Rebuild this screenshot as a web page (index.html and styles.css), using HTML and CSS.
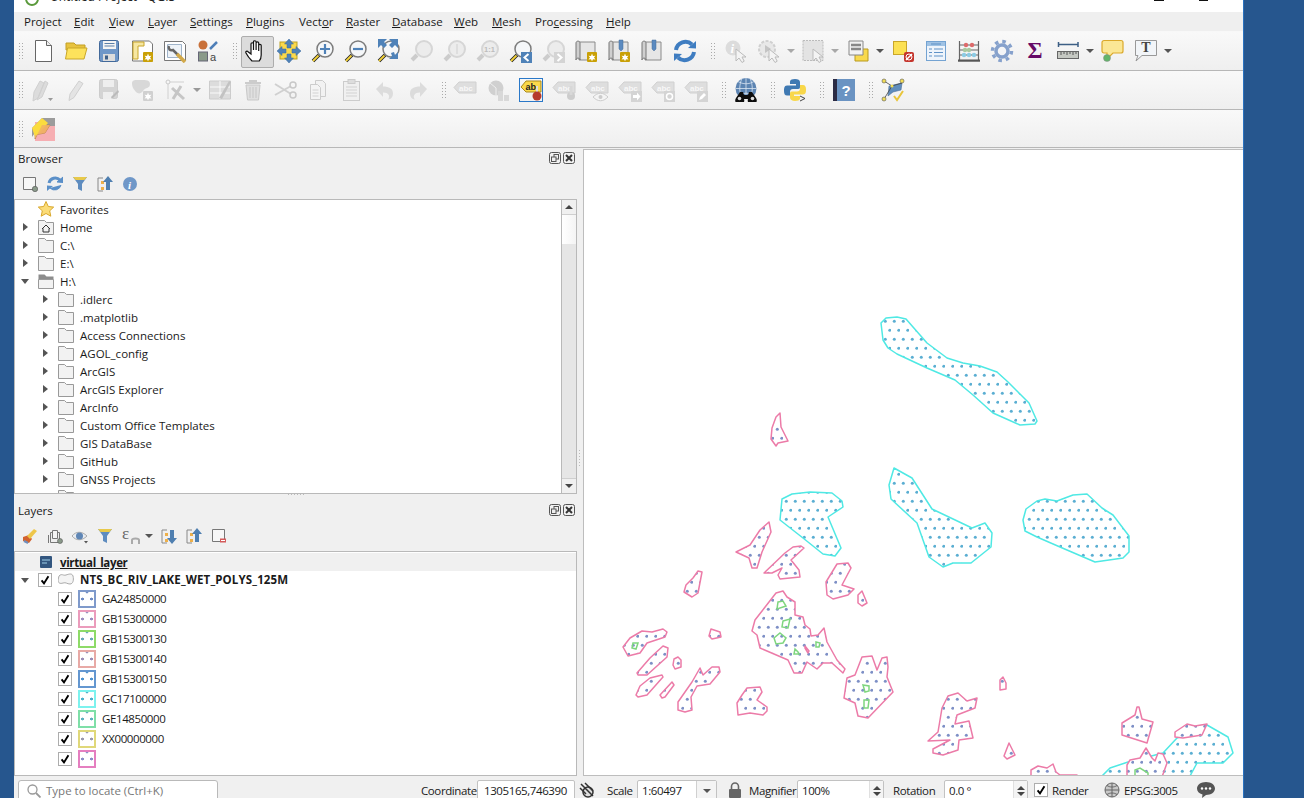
FILE: index.html
```html
<!DOCTYPE html>
<html lang="en">
<head>
<meta charset="utf-8">
<title>Untitled Project - QGIS</title>
<link rel="stylesheet" href="styles.css">
</head>
<body>
<svg class="sprite" aria-hidden="true">
  <defs>
    <symbol id="glass" viewBox="0 0 24 24"><path d="M8 16 3 21" stroke="#ccc" stroke-width="4"/><circle cx="15" cy="10" r="8" fill="#ececec" stroke="#d6d6d6" stroke-width="2"/></symbol>
    <symbol id="lens" viewBox="0 0 24 24"><path d="M9 16 3 22" stroke="#222" stroke-width="3.6"/><path d="M8.500 16.500 3 22" stroke="#f4d33a" stroke-width="1.800"/><circle cx="15" cy="10" r="8" fill="#f5f7f9" stroke="#7c7c7c" stroke-width="1.500"/></symbol>
    <symbol id="tag" viewBox="0 0 24 24"><path d="M1 9.500 6 4h17v11H6z" fill="#dedede" stroke="#d0d0d0"/><text x="6" y="13" class="abc">abc</text></symbol>
    <symbol id="scroll" viewBox="0 0 24 24"><path d="M5 3h16v18H5z" fill="#e6e6e6" stroke="#8a8a8a"/><path d="M2 4c0-2.500 4-2.500 4 0v17c0-2.500-4-2.500-4 0z" fill="#cfcfcf" stroke="#777"/></symbol>
    <symbol id="gearb" viewBox="0 0 24 24"><rect x="13" y="13" width="10" height="10" rx="1" fill="#c9a006"/><path d="M18 14.500 19 17l2.500-.2-1.500 1.700 1.500 2-2.500-.3-1 2-1-2-2.500.3 1.500-2-1.500-1.700 2.500.2z" fill="#fff"/></symbol>
    <symbol id="cur" viewBox="0 0 24 24"><path d="M12 10v12l3-3 3 4.500 2.200-1.300L18 18h4z" fill="#f4f4f4" stroke="#bbb"/></symbol>
    <symbol id="folder" viewBox="0 0 16 16"><path d="M.5 1.500h6l2 2h7v12H.5z" fill="#f2f2f2" stroke="#999"/></symbol>
    <symbol id="check" viewBox="0 0 14 14"><path d="M3 7.500 5.800 11 11 2.500" fill="none" stroke="#000" stroke-width="2.200"/></symbol>
    <pattern id="dt" width="9" height="18" patternUnits="userSpaceOnUse"><rect width="9" height="18" fill="#fff"/><circle cx="3.300" cy="15.300" r="1.500" fill="#5aaed2"/><circle cx="7.800" cy="6.300" r="1.500" fill="#5aaed2"/></pattern>
    <pattern id="dp" width="9" height="18" patternUnits="userSpaceOnUse"><rect width="9" height="18" fill="#fff"/><circle cx="3.300" cy="15.300" r="1.500" fill="#7d8fc6"/><circle cx="7.800" cy="6.300" r="1.500" fill="#7d8fc6"/></pattern>
  </defs>
</svg>
<div class="window">
  <div class="titlebar">
    <svg class="qlogo" viewBox="0 0 14 6"><path d="M1 0c1 3 3 5 6 5s5-2 6-5" fill="none" stroke="#5b9a3c" stroke-width="2"/></svg>
    <span class="titletext">Untitled Project - QGIS</span>
    <span class="minbar"></span><span class="maxbar"></span>
  </div>
  <nav class="menubar">
    <span>Pro<u>j</u>ect</span><span><u>E</u>dit</span><span><u>V</u>iew</span><span><u>L</u>ayer</span><span><u>S</u>ettings</span><span><u>P</u>lugins</span><span>Vect<u>o</u>r</span><span><u>R</u>aster</span><span><u>D</u>atabase</span><span><u>W</u>eb</span><span><u>M</u>esh</span><span>Pro<u>c</u>essing</span><span><u>H</u>elp</span>
  </nav>
  <div class="tb">
    <div class="h h-first"><i></i></div>
    <div class="b"><svg viewBox="0 0 24 24"><path d="M4.500 1.500h11l5 5v16h-16z" fill="#fff" stroke="#666"/><path d="M15.500 1.500v5h5" fill="#eee" stroke="#666"/></svg></div>
    <div class="b"><svg viewBox="0 0 24 24"><path d="M2 11V4h8l2 2h9v5z" fill="#e8c33f" stroke="#c29f25"/><path d="M3.500 9H23l-3 11H1.500z" fill="#fde25c" stroke="#c9a62a"/></svg></div>
    <div class="b"><svg viewBox="0 0 24 24"><rect x="2.500" y="1.500" width="19" height="21" rx="2" fill="#6f97c8" stroke="#42699a"/><rect x="6" y="2" width="13" height="8" fill="#f4f4f4"/><path d="M7.500 4.500h10M7.500 7h10" stroke="#5a7fa8"/><rect x="6" y="15" width="12" height="7" fill="#dcdcdc"/><rect x="8" y="16.500" width="3" height="4" fill="#3e5f88"/></svg></div>
    <div class="b"><svg viewBox="0 0 24 24"><path d="M2.500 2h17l3 3v17h-20z" fill="#fff" stroke="#777"/><path d="M3 3h11v4H8v13H3z" fill="#f6e7a2" stroke="#c9a62a"/><use href="#gearb"/></svg></div>
    <div class="b"><svg viewBox="0 0 24 24"><path d="M1.500 2.500h18l3 3v16h-21z" fill="#fff" stroke="#777"/><path d="M4.500 5.500h14v13h-14z" fill="#eef3f8" stroke="#9fb3c9"/><path d="M6 7c-1 3 1 5 4 4l5 5" fill="none" stroke="#666" stroke-width="2.500"/><path d="m14 15 8 8" stroke="#d2a94a" stroke-width="3.500"/></svg></div>
    <div class="b"><svg viewBox="0 0 24 24"><circle cx="7" cy="6" r="4.500" fill="#c9713a"/><path d="m14 10 7-7" stroke="#4f7fb8" stroke-width="2.500"/><rect x="2.500" y="13" width="9" height="9" fill="#8a9a8a" stroke="#667"/><text x="14" y="22" class="a-letter">a</text></svg></div>
    <div class="h h-15"><i></i></div>
    <div class="b on"><svg viewBox="0 0 24 24"><path d="M8 22c-2-2-5-6-6-8-.7-1.500 1-2.400 2-1.300L7 15V5c0-1.700 2.400-1.700 2.500 0v6-8c0-1.700 2.600-1.700 2.600 0v8-7c0-1.600 2.500-1.600 2.600 0v8-5.500c0-1.500 2.500-1.500 2.500 0V16c0 3-1 5-2 6z" fill="#fff" stroke="#111" stroke-width="1.200"/></svg></div>
    <div class="b"><svg viewBox="0 0 24 24"><rect x="3" y="3" width="17" height="17" fill="#fbd94a" stroke="#b9a025"/><path d="m12 0 4.500 5H14v4h-4V5H7.500zM12 24l4.500-5H14v-4h-4v4H7.500zM0 12l5-4.500V10h4v4H5v2.500zM24 12l-5-4.500V10h-4v4h4v2.500z" fill="#4f82b8" stroke="#3a6a9e" stroke-width=".5"/></svg></div>
    <div class="b"><svg viewBox="0 0 24 24"><use href="#lens"/><path d="M15 5v10M10 10h10" stroke="#4f82b8" stroke-width="2.200"/></svg></div>
    <div class="b"><svg viewBox="0 0 24 24"><use href="#lens"/><path d="M10 10h10" stroke="#4f82b8" stroke-width="2.200"/></svg></div>
    <div class="b"><svg viewBox="0 0 24 24"><use href="#lens"/><path d="M2 0h9L8 3l3 3-3 3-3-3-3 3zM22 0h-9l3 3-3 3 3 3 3-3 3 3zM22 20h-9l3-3-1-3 3-1 1 3 3-3z" fill="#4f82b8"/></svg></div>
    <div class="b"><svg viewBox="0 0 24 24"><use href="#glass"/></svg></div>
    <div class="b"><svg viewBox="0 0 24 24"><use href="#glass"/><path d="M15 5v10" stroke="#d0d0d0"/></svg></div>
    <div class="b"><svg viewBox="0 0 24 24"><use href="#glass"/><text x="9" y="13" class="oneone">1:1</text></svg></div>
    <div class="b"><svg viewBox="0 0 24 24"><use href="#lens"/><rect x="13" y="13" width="11" height="11" fill="#4f82b8"/><path d="m20.500 15-4 3.500 4 3.500" fill="none" stroke="#fff" stroke-width="2"/></svg></div>
    <div class="b"><svg viewBox="0 0 24 24"><use href="#glass"/><rect x="13" y="13" width="11" height="11" fill="#d4d4d4"/><path d="m16.500 15 4 3.500-4 3.500" fill="none" stroke="#fff" stroke-width="2"/></svg></div>
    <div class="b"><svg viewBox="0 0 24 24"><use href="#scroll"/><use href="#gearb"/></svg></div>
    <div class="b"><svg viewBox="0 0 24 24"><use href="#scroll"/><path d="M12 1h4v9l-2 2-2-2z" fill="#5b8ac0" stroke="#466c99" stroke-width=".5"/><use href="#gearb"/></svg></div>
    <div class="b"><svg viewBox="0 0 24 24"><use href="#scroll"/><path d="M12 1h4v9l-2 2-2-2z" fill="#5b8ac0" stroke="#466c99" stroke-width=".5"/></svg></div>
    <div class="b"><svg viewBox="0 0 24 24"><path d="M3 11A9.500 9.500 0 0 1 19 5.500" fill="none" stroke="#3f7dc1" stroke-width="4"/><path d="m15 9 8 .5V2z" fill="#3f7dc1"/><path d="M21 13A9.500 9.500 0 0 1 5 18.500" fill="none" stroke="#3f7dc1" stroke-width="4"/><path d="m9 15-8-.5V22z" fill="#3f7dc1"/></svg></div>
    <div class="h h-18"><i></i></div>
    <div class="b"><svg viewBox="0 0 24 24"><circle cx="9" cy="9" r="7.500" fill="#dcdcdc"/><text x="6.500" y="14" class="info-i">i</text><use href="#cur"/></svg></div>
    <div class="b"><svg viewBox="0 0 24 24"><circle cx="10" cy="10" r="8" fill="#e8e8e8" stroke="#d0d0d0" stroke-width="2" stroke-dasharray="3 1.500"/><path d="m8 6 6 4-6 4z" fill="#c4c4c4"/><use href="#cur"/></svg></div>
    <div class="dd d11 off"><i></i></div>
    <div class="b"><svg viewBox="0 0 24 24"><rect x="2" y="1.500" width="20" height="20" fill="#e3e3e3" stroke="#bbb" stroke-dasharray="2 1"/><use href="#cur"/></svg></div>
    <div class="dd off"><i></i></div>
    <div class="b"><svg viewBox="0 0 24 24"><path d="M9 10h13v12H9z" fill="#f8d94d" stroke="#b99a1e"/><path d="M3 2h14v14H3z" fill="#f2f2f2" stroke="#888"/><path d="M5 6h10M5 10h10" stroke="#888" stroke-width="2.500"/></svg></div>
    <div class="dd on-d"><i></i></div>
    <div class="b"><svg viewBox="0 0 24 24"><rect x="2.500" y="2.500" width="13" height="13" fill="#fce153" stroke="#c9a62a"/><rect x="13" y="13" width="10" height="10" rx="2" fill="#c5352c"/><path d="m15 21 6-6" stroke="#fff" stroke-width="1.500"/><circle cx="18" cy="18" r="3" fill="none" stroke="#fff"/></svg></div>
    <div class="b"><svg viewBox="0 0 24 24"><rect x="2.500" y="2.500" width="19" height="19" fill="#eef4fb" stroke="#74a3d2"/><path d="M3 3h18v4H3z" fill="#9fc2e4"/><path d="M7 5h10" stroke="#5d8fc4"/><path d="M5 10h3M10 10h9M5 13.500h3M10 13.500h9M5 17h3M10 17h9" stroke="#5f92c7"/></svg></div>
    <div class="b"><svg viewBox="0 0 24 24"><path d="M2.500 2v19M21.500 2v19M1 22h22M3 6h18M3 11h18M3 16h18" fill="none" stroke="#666" stroke-width="1.200"/><path d="M1 21.500h22" stroke="#555" stroke-width="2"/><circle cx="9" cy="6" r="2.200" fill="#dd6b6b"/><circle cx="15" cy="6" r="2.200" fill="#dd6b6b"/><circle cx="8" cy="11" r="2.200" fill="#a9c9a0"/><circle cx="12" cy="11" r="2.200" fill="#a9c9a0"/><circle cx="7" cy="16" r="2.200" fill="#8ccbe4"/><circle cx="12" cy="16" r="2.200" fill="#8ccbe4"/><circle cx="17" cy="16" r="2.200" fill="#8ccbe4"/></svg></div>
    <div class="b"><svg viewBox="0 0 24 24"><circle cx="12" cy="12" r="9.500" fill="none" stroke="#86a1cc" stroke-width="3.500" stroke-dasharray="3.500 3.960"/><circle cx="12" cy="12" r="6" fill="#f4f5f7" stroke="#86a1cc" stroke-width="3.500"/></svg></div>
    <div class="b"><svg viewBox="0 0 24 24"><text x="12" y="19" class="sigma">Σ</text></svg></div>
    <div class="b"><svg viewBox="0 0 24 24"><path d="M3 5.500h19M2.500 3v5M22 3v5" stroke="#3d5f85" stroke-width="1.500"/><rect x="1.500" y="12.500" width="21" height="7" fill="#c5c8c2" stroke="#666"/><path d="M5 13v3M8 13v2M11 13v3M14 13v2M17 13v3M20 13v2" stroke="#555"/></svg></div>
    <div class="dd on-d"><i></i></div>
    <div class="b"><svg viewBox="0 0 24 24"><path d="M3 1.500h17a2 2 0 0 1 2 2V12a2 2 0 0 1-2 2h-8l-6 6v-6H3a2 2 0 0 1-2-2V3.500a2 2 0 0 1 2-2z" fill="#fbe795" stroke="#dba92b" stroke-width="1.200"/><circle cx="6" cy="19" r="3.500" fill="#62b56a" stroke="#888" stroke-width=".5"/></svg></div>
    <div class="b"><svg viewBox="0 0 24 24"><path d="M1.500 1.500h21v15H8L2 22l2-5.500H1.500z" fill="#f2f5f8" stroke="#999"/><text x="12" y="13" class="t-letter">T</text></svg></div>
    <div class="dd on-d"><i></i></div>
  </div>
  <div class="tb">
    <div class="h h-first"><i></i></div>
    <div class="b"><svg viewBox="0 0 24 24"><path d="m3 14 6-11 4 2-6 15-5 3zM9 15l5-12 3 2-6 14-5 3z" fill="#dcdcdc" stroke="#d0d0d0"/><path d="m17 20 2.500 3 2.500-3z" fill="#999"/></svg></div>
    <div class="b"><svg viewBox="0 0 24 24"><path d="m6 16 9-13 4 2.500-9 14-5 3z" fill="#e4e4e4" stroke="#d0d0d0"/></svg></div>
    <div class="b"><svg viewBox="0 0 24 24"><rect x="2.500" y="1.500" width="18" height="19" rx="2" fill="#d4d4d4" stroke="#ccc"/><rect x="6" y="2" width="11" height="7" fill="#eee"/><rect x="6" y="14" width="10" height="7" fill="#eee"/><path d="m15 21 7-7-1-2-7 7z" fill="#bbb"/></svg></div>
    <div class="b"><svg viewBox="0 0 24 24"><path d="M2 5c0-4 6-3 9-3 5 0 9 0 9 4 0 5-5 3-7 7-2 3-5 3-7 1-2-3-4-4-4-9z" fill="#d8d8d8"/><rect x="13" y="13" width="10" height="10" rx="1" fill="#d0d0d0"/><path d="M18 14.500 19 17l2.500-.2-1.500 1.700 1.500 2-2.500-.3-1 2-1-2-2.500.3 1.500-2-1.500-1.700 2.500.2z" fill="#fff"/></svg></div>
    <div class="b"><svg viewBox="0 0 24 24"><circle cx="5" cy="4" r="2" fill="none" stroke="#c8c8c8"/><path d="M5 6v15M7 4h14" stroke="#d0d0d0"/><path d="m9 10 12 11M18 8l-8 13" stroke="#c6c6c6" stroke-width="3"/></svg></div>
    <div class="dd on-g"><i></i></div>
    <div class="b"><svg viewBox="0 0 24 24"><path d="M1.500 3h21v18h-21z" fill="#dcdcdc" stroke="#ccc"/><path d="M2 9h20M2 15h20M12 3v18" stroke="#fafafa"/><path d="m11 20 10-17 2 1-9 17z" fill="#c2c2c2"/></svg></div>
    <div class="b"><svg viewBox="0 0 24 24"><path d="M4 5h16M9 5V3h6v2" fill="none" stroke="#ccc" stroke-width="2"/><path d="M5 7h14l-1.500 15h-11z" fill="#e0e0e0" stroke="#c8c8c8"/><path d="M9 9v11M12 9v11M15 9v11" stroke="#c6c6c6"/></svg></div>
    <div class="b"><svg viewBox="0 0 24 24"><path d="M1 6 17 16M1 17 17 8" stroke="#d0d0d0" stroke-width="2"/><circle cx="19" cy="7" r="3" fill="none" stroke="#c8c8c8" stroke-width="1.500"/><circle cx="19" cy="17" r="3" fill="none" stroke="#c8c8c8" stroke-width="1.500"/></svg></div>
    <div class="b"><svg viewBox="0 0 24 24"><path d="M8.500 2.500h7l3 3v13h-10z" fill="#f2f2f2" stroke="#ccc"/><path d="M3.500 6.500h7l3 3v12h-10z" fill="#f4f4f4" stroke="#ccc"/><path d="M5.500 12h6M5.500 15h6M5.500 18h6" stroke="#d2d2d2"/></svg></div>
    <div class="b"><svg viewBox="0 0 24 24"><rect x="3.500" y="3.500" width="16" height="19" fill="#f0f0f0" stroke="#ccc"/><rect x="8" y="1.500" width="7" height="4" fill="#ddd" stroke="#ccc"/><path d="M6 9h11M6 12h11M6 15h11M6 18h11" stroke="#d2d2d2"/></svg></div>
    <div class="b"><svg viewBox="0 0 24 24"><path d="M3 11 10 4v4.500c6 0 10 2 10 7 0 3-2 6-5 6 2-2 2-7-5-7V19z" fill="#dcdcdc"/></svg></div>
    <div class="b"><svg viewBox="0 0 24 24"><path d="m21 11-7-7v4.500c-6 0-10 2-10 7 0 3 2 6 5 6-2-2-2-7 5-7V19z" fill="#dcdcdc"/></svg></div>
    <div class="h h-14"><i></i></div>
    <div class="b"><svg viewBox="0 0 24 24"><use href="#tag"/></svg></div>
    <div class="b"><svg viewBox="0 0 24 24"><circle cx="10" cy="10" r="7.500" fill="#d0d0d0"/><path d="m4 5 6 5v9" fill="none" stroke="#efefef"/><rect x="12" y="13" width="5" height="10" fill="#d8d8d8"/><rect x="18" y="17" width="5" height="6" fill="#d8d8d8"/></svg></div>
    <div class="b"><svg viewBox="0 0 24 24"><rect x=".5" y=".5" width="23" height="23" fill="none" stroke="#2a78c8"/><path d="M2 9 7 3h15v11H7z" fill="#fbd94a" stroke="#a8891c"/><text x="6.500" y="12" class="ab">ab</text><rect x="17" y="8" width="2" height="8" fill="#ddd"/><circle cx="18" cy="18" r="4.500" fill="#b53a2c"/></svg></div>
    <div class="b"><svg viewBox="0 0 24 24"><use href="#tag"/><circle cx="19" cy="18" r="4" fill="#cdcdcd"/><rect x="17.500" y="8" width="3" height="9" fill="#d8d8d8"/></svg></div>
    <div class="b"><svg viewBox="0 0 24 24"><use href="#tag"/><path d="M8 19c5-5 10-5 15 0-5 5-10 5-15 0z" fill="#f4f4f4" stroke="#ccc"/><circle cx="15.500" cy="19" r="2" fill="#ccc"/></svg></div>
    <div class="b"><svg viewBox="0 0 24 24"><use href="#tag"/><rect x="13" y="13" width="11" height="11" fill="#d4d4d4"/><path d="M15 17h4v-2.500l3.500 4-3.500 4V20h-4z" fill="#fff"/></svg></div>
    <div class="b"><svg viewBox="0 0 24 24"><use href="#tag"/><rect x="13" y="13" width="11" height="11" fill="#d4d4d4"/><circle cx="18.500" cy="18.500" r="3" fill="none" stroke="#fff" stroke-width="1.500"/></svg></div>
    <div class="b"><svg viewBox="0 0 24 24"><use href="#tag"/><rect x="13" y="13" width="11" height="11" fill="#d4d4d4"/><path d="m15 22 1-3 4-4 2 2-4 4z" fill="#fff"/></svg></div>
    <div class="h h-17"><i></i></div>
    <div class="b"><svg viewBox="0 0 24 24"><circle cx="12" cy="10.500" r="10.500" fill="#5c84b2"/><path d="M1.500 10.500h21M12 0v21M8 .5c-3 6-3 14 0 20M16 .5c3 6 3 14 0 20M4 3.500c5 3 11 3 16 0M4 17.500c5-3 11-3 16 0" stroke="#dbe6f2" stroke-width=".8" fill="none"/><path d="M6 14h3l1 3h4l1-3h3l4 6a4.500 4.500 0 1 1-8 1h-4a4.500 4.500 0 1 1-8-1z" fill="#0d0d0d"/><circle cx="5.500" cy="20.500" r="1.800" fill="#ddd"/><circle cx="18.500" cy="20.500" r="1.800" fill="#ddd"/></svg></div>
    <div class="h"><i></i></div>
    <div class="b"><svg viewBox="0 0 24 24"><path d="M12 1C6 1 7 4 7 6h6v1.500H4C1 7.500 1 11 1 13c0 3 1 4.500 3 4.500h3V14c0-2 1-3 3-3h5c2 0 2-1 2-3V4c0-2-2-3-5-3z" fill="#3f79b2"/><path d="M12 23c6 0 5-3 5-5h-6v-1.500h9c3 0 3-3 3-5 0-3-1-4.500-3-4.500h-3v3.500c0 2-1 3-3 3H9c-2 0-2 1-2 3v3c0 2 2 3.500 5 3.500z" fill="#f8d74a"/><path d="m17 18 5 2.500-5 2.500" fill="none" stroke="#444"/></svg></div>
    <div class="h"><i></i></div>
    <div class="b"><svg viewBox="0 0 24 24"><rect x="1" y="1" width="4" height="22" fill="#2b2b44"/><rect x="5" y="1" width="18" height="22" fill="#6a93c2"/><text x="14" y="18" class="help-q">?</text></svg></div>
    <div class="h"><i></i></div>
    <div class="b"><svg viewBox="0 0 24 24"><path d="m8 8 13-3-1 7-8 2-5 4z" fill="#5f8dbd" stroke="#4a6f98" stroke-width=".6"/><path d="M3 3l8 5 10-3M3 21l8-13" stroke="#444" stroke-width=".8" fill="none"/><circle cx="3" cy="3" r="2" fill="#f2dd55" stroke="#555" stroke-width=".6"/><circle cx="21" cy="3" r="2" fill="#f2dd55" stroke="#555" stroke-width=".6"/><circle cx="3" cy="21" r="2" fill="#f2dd55" stroke="#555" stroke-width=".6"/><circle cx="11" cy="8" r="1.500" fill="#f2dd55"/><path d="m13 18 3 4 6-9" fill="none" stroke="#e9c53a" stroke-width="2"/></svg></div>
  </div>
  <div class="tb tb-last">
    <div class="h h-first"><i></i></div>
    <div class="b"><svg viewBox="0 0 24 24"><rect x="4" y="5" width="20" height="19" fill="#f6aeb2"/><path d="M1 20V11L11 1h13v8H9z" fill="#9c9c9c"/><path d="m4 22 7-14h8l-5 8-10 2z" fill="#f0b066" stroke="#a9743a" stroke-width=".6"/><path d="m1 11 10-10 6 5-8 9-5 5z" fill="#fbdc3e"/><path d="m4 22 7-14h8l-5 8-10 2z" fill="#f0b066" opacity=".8"/></svg></div>
  </div>
  <main class="main">
    <div class="dock">
      <section class="browser">
        <div class="pt"><span>Browser</span><span class="pbtns"><svg viewBox="0 0 12 12"><rect x=".5" y=".5" width="11" height="11" rx="2" fill="none" stroke="#555"/><rect x="5" y="2.500" width="4.500" height="4.500" fill="none" stroke="#555"/><rect x="2.500" y="5" width="4.500" height="4.500" fill="#eee" stroke="#555"/></svg><svg viewBox="0 0 12 12"><rect x=".5" y=".5" width="11" height="11" rx="2" fill="none" stroke="#555"/><path d="m3 3 6 6M9 3 3 9" stroke="#333" stroke-width="2"/></svg></span></div>
        <div class="ptools">
          <svg viewBox="0 0 16 16"><path d="M1.500 1.500h12v12h-12z" fill="#f7f7f7" stroke="#777"/><circle cx="13" cy="13" r="2.700" fill="#8a9a8a" stroke="#555" stroke-width=".6"/></svg>
          <svg viewBox="0 0 16 16"><path d="M2 7a6.500 6.500 0 0 1 11-3" fill="none" stroke="#5a8fc8" stroke-width="3"/><path d="m10 6 6 .5V1zM14 9a6.500 6.500 0 0 1-11 3" fill="#5a8fc8" stroke="#5a8fc8"/><path d="m6 10-6-.5V15z" fill="#5a8fc8"/></svg>
          <svg viewBox="0 0 16 16"><path d="M1 1h14L10 8v7l-4-2V8z" fill="#5e8cbf"/><path d="M1 1h14l-2.500 3h-9z" fill="#e8c94a"/></svg>
          <svg viewBox="0 0 16 16"><path d="M6 2H1v13h5" fill="none" stroke="#888"/><rect x="4" y="5" width="3" height="3" fill="#eeb04a"/><rect x="4" y="11" width="3" height="3" fill="#eeb04a"/><path d="m11 0 5 6h-3v8H9V6H6z" fill="#4f7fb0"/></svg>
          <svg viewBox="0 0 16 16"><circle cx="8" cy="8" r="7" fill="#6f97c8"/><text x="6" y="12.500" class="info-small">i</text></svg>
        </div>
        <div class="tree btree">
          <div class="tree-body">
            <div class="r"><span class="ar"></span><svg class="ti star" viewBox="0 0 16 16"><path d="m8 .5 2.300 5 5.400.6-4 3.700 1.100 5.400L8 12.500l-4.800 2.700 1.100-5.400-4-3.700 5.400-.6z" fill="#fbdc78" stroke="#d8a72c"/></svg><span>Favorites</span></div>
            <div class="r"><span class="ar rt"></span><svg class="ti" viewBox="0 0 16 16"><use href="#folder"/><path d="m4 10 4-4 4 4M5 9.500V13h6V9.500" fill="none" stroke="#333"/></svg><span>Home</span></div>
            <div class="r"><span class="ar rt"></span><svg class="ti" viewBox="0 0 16 16"><use href="#folder"/></svg><span>C:\</span></div>
            <div class="r"><span class="ar rt"></span><svg class="ti" viewBox="0 0 16 16"><use href="#folder"/></svg><span>E:\</span></div>
            <div class="r"><span class="ar dn"></span><svg class="ti" viewBox="0 0 16 16"><path d="M.5 1.500h6l2 2h7v3H.5z" fill="#8c8c8c"/><path d="M.5 6.500h15v9H.5z" fill="#f2f2f2" stroke="#999"/></svg><span>H:\</span></div>
            <div class="r l1"><span class="ar rt"></span><svg class="ti" viewBox="0 0 16 16"><use href="#folder"/></svg><span>.idlerc</span></div>
            <div class="r l1"><span class="ar rt"></span><svg class="ti" viewBox="0 0 16 16"><use href="#folder"/></svg><span>.matplotlib</span></div>
            <div class="r l1"><span class="ar rt"></span><svg class="ti" viewBox="0 0 16 16"><use href="#folder"/></svg><span>Access Connections</span></div>
            <div class="r l1"><span class="ar rt"></span><svg class="ti" viewBox="0 0 16 16"><use href="#folder"/></svg><span>AGOL_config</span></div>
            <div class="r l1"><span class="ar rt"></span><svg class="ti" viewBox="0 0 16 16"><use href="#folder"/></svg><span>ArcGIS</span></div>
            <div class="r l1"><span class="ar rt"></span><svg class="ti" viewBox="0 0 16 16"><use href="#folder"/></svg><span>ArcGIS Explorer</span></div>
            <div class="r l1"><span class="ar rt"></span><svg class="ti" viewBox="0 0 16 16"><use href="#folder"/></svg><span>ArcInfo</span></div>
            <div class="r l1"><span class="ar rt"></span><svg class="ti" viewBox="0 0 16 16"><use href="#folder"/></svg><span>Custom Office Templates</span></div>
            <div class="r l1"><span class="ar rt"></span><svg class="ti" viewBox="0 0 16 16"><use href="#folder"/></svg><span>GIS DataBase</span></div>
            <div class="r l1"><span class="ar rt"></span><svg class="ti" viewBox="0 0 16 16"><use href="#folder"/></svg><span>GitHub</span></div>
            <div class="r l1"><span class="ar rt"></span><svg class="ti" viewBox="0 0 16 16"><use href="#folder"/></svg><span>GNSS Projects</span></div>
            <div class="r l1"><span class="ar rt"></span><svg class="ti" viewBox="0 0 16 16"><use href="#folder"/></svg></div>
          </div>
          <div class="sb">
            <div class="sb-btn"><i class="up"></i></div>
            <div class="sb-thumb"></div>
            <div class="sb-track"></div>
            <div class="sb-btn sb-end"><i class="down"></i></div>
          </div>
        </div>
        <div class="hsplit"><i></i></div>
      </section>
      <section class="layers">
        <div class="pt pt-l"><span>Layers</span><span class="pbtns"><svg viewBox="0 0 12 12"><rect x=".5" y=".5" width="11" height="11" rx="2" fill="none" stroke="#555"/><rect x="5" y="2.500" width="4.500" height="4.500" fill="none" stroke="#555"/><rect x="2.500" y="5" width="4.500" height="4.500" fill="#eee" stroke="#555"/></svg><svg viewBox="0 0 12 12"><rect x=".5" y=".5" width="11" height="11" rx="2" fill="none" stroke="#555"/><path d="m3 3 6 6M9 3 3 9" stroke="#333" stroke-width="2"/></svg></span></div>
        <div class="ptools ptools-l">
          <svg viewBox="0 0 16 16"><path d="m1 9 6-2 3 4-3 4-6-2z" fill="#d2622f"/><path d="m5 8 3 3 7-8-3-2z" fill="#eec64a"/><path d="m2 13 4 2" stroke="#6e8fbe" stroke-width="2"/></svg>
          <svg viewBox="0 0 16 16"><path d="M3.500 4.500h9v10h-9z" fill="#eee" stroke="#777"/><path d="M5.500 2.500h5v8h-5zM1.500 7v8" fill="#f4f4f4" stroke="#777"/><circle cx="13" cy="13" r="2.500" fill="#8a9a8a" stroke="#555" stroke-width=".6"/></svg>
          <svg viewBox="0 0 16 16"><path d="M0 8c4-5 10-5 15 0-5 5-11 5-15 0z" fill="#e9edf2" stroke="#aaa"/><circle cx="7.500" cy="8" r="3.500" fill="#5f86b5"/><path d="m12 13 2 2.500 2-2.500z" fill="#555"/></svg>
          <svg viewBox="0 0 16 16"><path d="M1 1h14L10 8v7l-4-2V8z" fill="#5e8cbf"/><path d="M1 1h14l-2.500 3h-9z" fill="#e8c94a"/></svg>
          <span class="eps"><svg viewBox="0 0 22 20"><text x="0" y="13" class="epsilon">ε</text><path d="M10 18v-4c0-2 7-2 7 0v4" fill="none" stroke="#aaa" stroke-width="2"/></svg><i></i></span>
          <svg viewBox="0 0 16 16"><path d="M6 2H1v13h5" fill="none" stroke="#888"/><rect x="4" y="5" width="3" height="3" fill="#eeb04a"/><rect x="4" y="11" width="3" height="3" fill="#eeb04a"/><path d="m11 16 5-6h-3V2H9v8H6z" fill="#4f7fb0"/></svg>
          <svg viewBox="0 0 16 16"><path d="M6 2H1v13h5" fill="none" stroke="#888"/><rect x="4" y="5" width="3" height="3" fill="#eeb04a"/><rect x="4" y="11" width="3" height="3" fill="#eeb04a"/><path d="m11 0 5 6h-3v8H9V6H6z" fill="#4f7fb0"/></svg>
          <svg viewBox="0 0 16 16"><path d="M1.500 1.500h12v12h-12z" fill="#f7f7f7" stroke="#777"/><rect x="9" y="10.500" width="6" height="4" fill="#d45b5b"/><path d="M10 12.500h4" stroke="#fff"/></svg>
        </div>
        <div class="tree ltree">
          <div class="lr-virtual"><svg class="vl" viewBox="0 0 12 12"><rect width="12" height="12" rx="1" fill="#32567f"/><path d="M2 4h8M2 7h5" stroke="#9fd0ea"/></svg><b class="vname"><u>virtual_layer</u></b></div>
          <div class="lr-group"><span class="ar dn"></span><span class="cb"><svg viewBox="0 0 14 14"><use href="#check"/></svg></span><svg class="poly" viewBox="0 0 16 16"><path d="M1 4c3-3 4 0 7-1s6-2 7 1c1 4 0 8-3 8s-4-2-7-1-5 0-5-3z" fill="#f4f4f4" stroke="#aaa"/></svg><b class="gname">NTS_BC_RIV_LAKE_WET_POLYS_125M</b></div>
          <div class="lr"><span class="cb"><svg viewBox="0 0 14 14"><use href="#check"/></svg></span><span class="sw sw1"></span><span>GA24850000</span></div>
          <div class="lr"><span class="cb"><svg viewBox="0 0 14 14"><use href="#check"/></svg></span><span class="sw sw2"></span><span>GB15300000</span></div>
          <div class="lr"><span class="cb"><svg viewBox="0 0 14 14"><use href="#check"/></svg></span><span class="sw sw3"></span><span>GB15300130</span></div>
          <div class="lr"><span class="cb"><svg viewBox="0 0 14 14"><use href="#check"/></svg></span><span class="sw sw4"></span><span>GB15300140</span></div>
          <div class="lr"><span class="cb"><svg viewBox="0 0 14 14"><use href="#check"/></svg></span><span class="sw sw5"></span><span>GB15300150</span></div>
          <div class="lr"><span class="cb"><svg viewBox="0 0 14 14"><use href="#check"/></svg></span><span class="sw sw6"></span><span>GC17100000</span></div>
          <div class="lr"><span class="cb"><svg viewBox="0 0 14 14"><use href="#check"/></svg></span><span class="sw sw7"></span><span>GE14850000</span></div>
          <div class="lr"><span class="cb"><svg viewBox="0 0 14 14"><use href="#check"/></svg></span><span class="sw sw8"></span><span>XX00000000</span></div>
          <div class="lr"><span class="cb"><svg viewBox="0 0 14 14"><use href="#check"/></svg></span><span class="sw sw9"></span></div>
        </div>
      </section>
    </div>
    <div class="vsplit"><i></i></div>
    <div class="canvas">
      <svg class="map" viewBox="584 150 659 625">
        <g fill="url(#dt)" stroke="#4fe9e4" stroke-width="1.500" stroke-linejoin="round">
          <polygon points="881,323 886,318 897,317 906,319 927,343 947,358 963,363 980,366 997,372 1008,382 1029,403 1037,421 1035,424 1020,425 993,413 973,395 955,380 927,368 897,354 888,348 883,340"/>
          <polygon points="782,499 792,494 810,492 832,493 842,501 843,507 828,517 841,548 835,556 823,554 803,538 780,520"/>
          <polygon points="894,468 912,478 932,509 972,528 985,523 992,533 991,547 971,563 953,563 943,567 929,557 917,523 891,499 889,485"/>
          <polygon points="1026,509 1037,501 1045,499 1057,501 1073,495 1087,494 1102,508 1113,515 1129,536 1129,552 1123,558 1095,562 1060,547 1037,537 1025,531 1023,520"/>
          <polygon points="1102,776 1110,768 1128,762 1163,753 1177,738 1207,725 1228,737 1233,753 1223,763 1197,763 1190,776"/>
        </g>
        <g fill="url(#dp)" stroke="#ec7ba8" stroke-width="1.500" stroke-linejoin="round">
          <polygon points="780,413 781,427 788,441 778,443 776,446 771,439 772,428 776,417"/>
          <polygon points="698,571 702,572 698,593 692,597 684,592 686,585 693,578"/>
          <polygon points="776,593 783,591 787,597 795,602 795,615 803,617 805,625 810,629 811,636 818,635 824,628 827,642 837,660 845,669 843,673 832,663 823,663 817,669 807,662 802,673 794,673 788,660 760,648 757,635 752,631 755,620"/>
          <polygon points="862,657 872,656 877,670 882,658 887,657 888,667 887,677 893,692 868,718 858,716 855,703 844,698 847,678 855,675"/>
          <polygon points="642,631 652,632 663,629 667,632 665,637 647,643 640,653 628,656 623,647 630,638"/>
          <polygon points="663,646 668,648 667,657 647,675 638,675 637,673 650,658"/>
          <polygon points="678,657 681,660 681,667 675,669 673,665 674,659"/>
          <polygon points="662,675 663,677 647,695 638,697 636,695 640,686 650,678"/>
          <polygon points="672,682 674,685 665,697 662,698 660,695"/>
          <polygon points="700,668 703,675 712,667 719,667 720,672 710,684 697,686 691,697 692,710 685,712 678,710 678,702 692,682"/>
          <polygon points="711,629 720,632 721,637 712,639 709,636"/>
          <polygon points="747,688 760,687 762,692 757,700 767,707 767,711 763,715 750,713 738,715 737,703 742,695"/>
          <polygon points="801,546 804,548 791,560 799,570 800,577 780,579 778,575 782,568 772,573 764,573 785,553 793,547"/>
          <polygon points="769,522 771,532 762,552 757,568 752,568 749,558 736,552 750,545 760,530"/>
          <polygon points="837,564 848,563 851,568 842,585 854,589 848,595 833,599 827,595 826,582"/>
          <polygon points="862,591 867,603 862,606 858,603 858,595"/>
          <polygon points="948,696 958,693 967,701 977,698 975,708 957,715 955,724 969,721 973,738 959,740 958,750 943,755 933,753 933,749 950,740 928,741 938,732 942,708"/>
          <polygon points="1000,680 1003,677 1006,683 1006,689 1000,690"/>
          <polygon points="1009,743 1015,755 1007,759 1004,756"/>
          <polygon points="1031,770 1038,766 1047,768 1053,764 1056,772 1060,775 1077,775 1077,780 1031,780"/>
          <polygon points="1122,723 1135,715 1137,707 1139,707 1142,719 1153,722 1147,743 1122,735"/>
          <polygon points="1175,732 1187,724 1195,726 1207,724 1202,735 1183,738 1175,737"/>
          <polygon points="1127,765 1130,760 1140,758 1146,748 1152,758 1155,761 1158,753 1163,754 1167,763 1162,777 1127,777"/>
          <polygon points="805,646 809,651 808,653 805,648"/>
        </g>
        <g fill="none" stroke="#7fd67f" stroke-width="1.500">
          <polygon points="778,602 783,601 786,606 777,609"/>
          <polygon points="783,621 790,619 788,628 782,627"/>
          <polygon points="780,633 786,638 783,643 776,644 774,638"/>
          <polygon points="795,649 798,652 799,654 794,654"/>
          <polygon points="816,642 820,643 819,647 816,647"/>
          <polygon points="633,643 638,643 636,649 632,648"/>
          <polygon points="863,685 869,686 869,691 865,692"/>
          <polygon points="864,700 869,700 868,708 864,708"/>
          <polygon points="1135,777 1135,770 1140,768 1148,773 1148,777"/>
        </g>
      </svg>
    </div>
  </main>
  <footer class="status">
    <div class="locator"><svg viewBox="0 0 14 14"><circle cx="5.500" cy="5.500" r="4.500" fill="none" stroke="#999" stroke-width="1.300"/><path d="m9 9 4.500 4.500" stroke="#999" stroke-width="1.800"/></svg><span>Type to locate (Ctrl+K)</span></div>
    <span class="lbl l-coord">Coordinate</span>
    <div class="inp i-coord">1305165,746390</div>
    <svg class="st-mouse" viewBox="0 0 16 16"><circle cx="9" cy="10" r="5" fill="#ddd" stroke="#333" stroke-width="1.500"/><path d="m2 2 12 12M6 1l8 8M1 6l6 6" stroke="#333" stroke-width="1.500"/></svg>
    <span class="lbl l-scale">Scale</span>
    <div class="inp i-scale"><span>1:60497</span><span class="combo-btn"><i></i></span></div>
    <svg class="st-lock" viewBox="0 0 14 16"><path d="M3.500 7V4.500a3.500 3.500 0 0 1 7 0V7" fill="none" stroke="#666" stroke-width="1.600"/><rect x="1" y="7" width="12" height="9" rx="1" fill="#666"/></svg>
    <span class="lbl l-mag">Magnifier</span>
    <div class="inp i-mag"><span>100%</span><span class="spin"><i class="up"></i><i class="down"></i></span></div>
    <span class="lbl l-rot">Rotation</span>
    <div class="inp i-rot"><span>0.0 °</span><span class="spin"><i class="up"></i><i class="down"></i></span></div>
    <span class="cb st-cb"><svg viewBox="0 0 14 14"><use href="#check"/></svg></span>
    <span class="lbl l-render">Render</span>
    <svg class="st-globe" viewBox="0 0 16 16"><circle cx="8" cy="8" r="7" fill="#c8c8c8" stroke="#666"/><path d="M1 8h14M8 1v14M3 3.500c3 2 7 2 10 0M3 12.500c3-2 7-2 10 0" fill="none" stroke="#666"/></svg>
    <span class="lbl l-epsg">EPSG:3005</span>
    <svg class="st-msg" viewBox="0 0 18 16"><path d="M9 0c5 0 9 2.800 9 6.500S14 13 9 13l-4 3 .5-3.500C2 11.500 0 9.500 0 6.500 0 2.800 4 0 9 0z" fill="#555"/><circle cx="5" cy="6.500" r="1.200" fill="#fff"/><circle cx="9" cy="6.500" r="1.200" fill="#fff"/><circle cx="13" cy="6.500" r="1.200" fill="#fff"/></svg>
  </footer>
</div>
</body>
</html>
```

FILE: styles.css
```css
* { box-sizing: border-box; }
html, body { margin: 0; height: 100%; overflow: hidden; }
body { background: #26568e; font: 11.5px/16px "Open Sans", "Liberation Sans", sans-serif; color: #1a1a1a; }
.sprite { position: absolute; width: 0; height: 0; }
.window { margin-left: 14px; width: 1230px; height: 798px; background: #f0f0f0; overflow: hidden; border-right: 1px solid #2a72c0; display: flex; flex-direction: column; }
svg { display: block; overflow: hidden; }

.titlebar { height: 12px; background: #fff; display: flex; align-items: flex-start; overflow: hidden; flex: none; }
.qlogo { width: 14px; height: 6px; margin-left: 11px; }
.titletext { margin: -11px 0 0 11px; font-size: 12px; color: #222; width: 1105px; }
.minbar { width: 10px; height: 1px; background: #111; margin-left: -1px; }
.maxbar { width: 9px; height: 1px; background: #111; margin-left: 35px; }

.menubar { height: 20px; flex: none; display: grid; grid-template-columns: 50px 35px 39px 42px 56px 53px 47px 46px 62px 38px 43px 71px auto; padding-left: 10px; background: #efefef; align-items: center; border-bottom: 1px solid #f8f8f8; }

.tb { height: 39px; flex: none; display: flex; align-items: center; border-bottom: 1px solid #b7b7b7; background: linear-gradient(#f9f9f9, #efefef); }
.tb-last { height: 38px; }
.b { width: 33px; height: 24px; padding-left: 5px; flex: none; }
.b svg { width: 24px; height: 24px; }
.b.on { position: relative; }
.b.on::before { content: ""; position: absolute; left: 2px; top: -3px; width: 31px; height: 30px; background: #dcdcdc; border: 1px solid #adadad; border-radius: 2px; }
.b.on svg { position: relative; }
.h { width: 16px; height: 16px; padding-left: 9px; flex: none; }
.h i { display: block; width: 4px; height: 16px; background: radial-gradient(circle at .5px .5px, #aaa .7px, transparent .8px) 0 0 / 3px 3px; }
.h-first { width: 12px; padding-left: 5px; }
.h-15 { width: 15px; }
.h-18 { width: 18px; padding-left: 10px; }
.h-14 { width: 14px; padding-left: 8px; }
.h-17 { width: 17px; padding-left: 10px; }
.dd { width: 12px; flex: none; display: flex; justify-content: center; }
.dd.d11 { width: 11px; }
.dd i { width: 0; height: 0; border: 4px solid transparent; border-top-color: #555; border-bottom: 0; }
.dd.off i { border-top-color: #a8a8a8; }
.dd.on-g i { border-top-color: #999; }

.abc { font: bold 8px "Liberation Sans", sans-serif; fill: #f8f8f8; }
.a-letter { font: 11px "Liberation Sans", sans-serif; fill: #444; }
.oneone { font: bold 7.500px "Liberation Sans", sans-serif; fill: #bdbdbd; }
.info-i { font: italic bold 13px "Liberation Serif", serif; fill: #fff; }
.info-small { font: italic bold 11px "Liberation Serif", serif; fill: #fff; }
.sigma { font: bold 23px "Liberation Serif", serif; fill: #660a66; text-anchor: middle; }
.t-letter { font: bold 14px "Liberation Serif", serif; fill: #444; text-anchor: middle; }
.ab { font: bold 9px "Liberation Sans", sans-serif; fill: #222; }
.help-q { font: bold 15px "Liberation Sans", sans-serif; fill: #fff; text-anchor: middle; }
.epsilon { font: 17px "Liberation Serif", serif; fill: #666; }

.main { flex: none; height: 628px; display: flex; }
.dock { width: 563px; flex: none; display: flex; flex-direction: column; }
.browser { height: 349px; flex: none; display: flex; flex-direction: column; }
.layers { flex: 1; min-height: 0; display: flex; flex-direction: column; }
.pt { height: 20px; flex: none; padding: 0 0 0 4px; display: flex; justify-content: space-between; align-items: center; }
.pt > span:first-child { padding-top: 2px; }
.pt-l { height: 23px; padding-top: 3px; }
.pbtns { display: flex; gap: 2px; padding-right: 2px; }
.pbtns svg { width: 12px; height: 12px; }
.ptools { height: 31px; flex: none; display: flex; align-items: center; gap: 9px; padding-left: 8px; }
.ptools > svg { width: 16px; height: 16px; flex: none; }
.eps { display: flex; align-items: center; gap: 1px; margin-right: -1px; }
.eps svg { width: 22px; height: 20px; }
.eps i { width: 0; height: 0; border: 4px solid transparent; border-top-color: #555; border-bottom: 0; }

.tree { background: #fff; border: 1px solid #b9b9b9; overflow: hidden; }
.btree { height: 295px; flex: none; display: flex; }
.tree-body { flex: 1; min-width: 0; overflow: hidden; }
.r { height: 18px; display: flex; align-items: center; }
.r > span:not(.ar) { padding-top: 2px; }
.r.l1 { padding-left: 20px; }
.ar { width: 20px; height: 18px; flex: none; position: relative; }
.ar.rt::after { content: ""; position: absolute; left: 8px; top: 5px; border: 4px solid transparent; border-left: 5px solid #555; border-right: 0; }
.ar.dn::after { content: ""; position: absolute; left: 6px; top: 7px; border: 4px solid transparent; border-top: 5px solid #555; border-bottom: 0; }
.ti { width: 16px; height: 16px; margin: 0 6px 0 3px; flex: none; }
.sb { width: 15px; flex: none; display: flex; flex-direction: column; background: #e6e6e6; border-left: 1px solid #b9b9b9; }
.sb-btn { height: 15px; flex: none; display: flex; align-items: center; justify-content: center; background: #f0f0f0; border-bottom: 1px solid #cfcfcf; }
.sb-end { border-bottom: 0; border-top: 1px solid #cfcfcf; }
.sb-btn i, .spin i { width: 0; height: 0; border: 4px solid transparent; }
.sb-btn i.up, .spin i.up { border-bottom-color: #444; border-top: 0; }
.sb-btn i.down, .spin i.down { border-top-color: #444; border-bottom: 0; }
.sb-thumb { height: 29px; flex: none; background: linear-gradient(90deg, #fff, #f4f4f4); }
.sb-track { flex: 1; }
.hsplit { height: 3px; flex: none; display: flex; justify-content: center; }
.hsplit i { width: 16px; height: 2px; background: radial-gradient(circle at .5px .5px, #bbb .7px, transparent .8px) 0 0 / 3px 2px; }

.ltree { flex: 1; min-height: 0; padding-top: 1px; }
.lr-virtual { height: 18px; background: #f0f0f0; display: flex; align-items: center; padding-left: 25px; }
.vl { width: 12px; height: 12px; margin-right: 8px; }
.vname { letter-spacing: -.35px; padding-top: 2px; }
.gname { letter-spacing: .13px; }
.lr-group { height: 18px; display: flex; align-items: center; margin-top: 0; }
.poly { width: 16px; height: 16px; margin: 0 6px 0 6px; }
.lr-group .cb { margin-left: 3px; }
.lr { height: 20px; display: flex; align-items: center; padding-left: 43px; letter-spacing: -.4px; }
.cb { width: 14px; height: 14px; flex: none; background: #fff; border: 1px solid #adadad; }
.cb svg { width: 12px; height: 12px; }
.sw { --c: #999; --d: #888; width: 18px; height: 18px; margin: 0 6px; flex: none; border: 2px solid var(--c); background: radial-gradient(circle at 2.500px 7px, var(--d) 1.200px, transparent 1.700px), radial-gradient(circle at 11.500px 7px, var(--d) 1.200px, transparent 1.700px), radial-gradient(circle at 7px 0, var(--d) 1.200px, transparent 1.700px); }
.sw1 { --c: #7f9acb; --d: #6f8cc4; }
.sw2 { --c: #eb9cbc; --d: #9a8fc0; }
.sw3 { --c: #8edb68; --d: #6aa7b8; }
.sw4 { --c: #e8aaa6; --d: #9a8fb8; }
.sw5 { --c: #6497d0; --d: #4f93cf; }
.sw6 { --c: #7df2ee; --d: #4fb0cc; }
.sw7 { --c: #7fdfa8; --d: #5fb0c0; }
.sw8 { --c: #e0d87a; --d: #9a9ab0; }
.sw9 { --c: #e57fc0; --d: #8a8fc8; }

.vsplit { width: 6px; flex: none; display: flex; align-items: center; justify-content: center; padding-bottom: 8px; }
.vsplit i { width: 2px; height: 16px; background: radial-gradient(circle at .5px .5px, #bbb .7px, transparent .8px) 0 0 / 2px 3px; }
.canvas { flex: 1; min-width: 0; margin-top: 1px; background: #fff; border-left: 1px solid #bdbdbd; border-top: 1px solid #bdbdbd; border-bottom: 1px solid #bdbdbd; overflow: hidden; }
.map { width: 659px; height: 625px; }

.status { flex: 1; display: flex; align-items: flex-start; padding-top: 4px; overflow: hidden; white-space: nowrap; }
.lbl { line-height: 21px; flex: none; letter-spacing: -.4px; }
.locator { width: 200px; height: 22px; margin-left: 4px; background: #fff; border: 1px solid #b9b9b9; border-radius: 3px 3px 0 0; display: flex; align-items: center; padding-left: 8px; gap: 5px; color: #777; flex: none; }
.locator svg { width: 14px; height: 14px; }
.inp { height: 22px; background: #fff; border: 1px solid #c2c2c2; border-radius: 2px 2px 0 0; display: flex; align-items: center; justify-content: space-between; padding-left: 4px; flex: none; letter-spacing: -.4px; }
.l-coord { width: 56px; margin-left: 203px; }
.i-coord { width: 98px; padding-left: 6px; }
.st-mouse { width: 16px; height: 16px; margin: 2px 0 0 4px; flex: none; }
.l-scale { width: 30px; margin-left: 12px; }
.i-scale { width: 80px; }
.combo-btn { width: 20px; height: 20px; display: flex; align-items: center; justify-content: center; border-left: 1px solid #d0d0d0; background: #f4f4f4; }
.combo-btn i { width: 0; height: 0; border: 4px solid transparent; border-top-color: #555; border-bottom: 0; }
.st-lock { width: 14px; height: 16px; margin: 2px 0 0 11px; flex: none; }
.l-mag { width: 48px; margin-left: 7px; }
.i-mag { width: 87px; }
.spin { width: 14px; height: 20px; display: flex; flex-direction: column; align-items: center; justify-content: center; gap: 2px; background: #f4f4f4; border-left: 1px solid #e0e0e0; }
.l-rot { width: 51px; margin-left: 9px; }
.i-rot { width: 84px; }
.st-cb { margin: 3px 0 0 6px; }
.l-render { width: 52px; margin-left: 4px; }
.st-globe { width: 16px; height: 16px; margin: 2px 0 0 0; flex: none; }
.l-epsg { width: 73px; margin-left: 4px; }
.st-msg { width: 18px; height: 16px; margin: 2px 0 0 0; flex: none; }
```
